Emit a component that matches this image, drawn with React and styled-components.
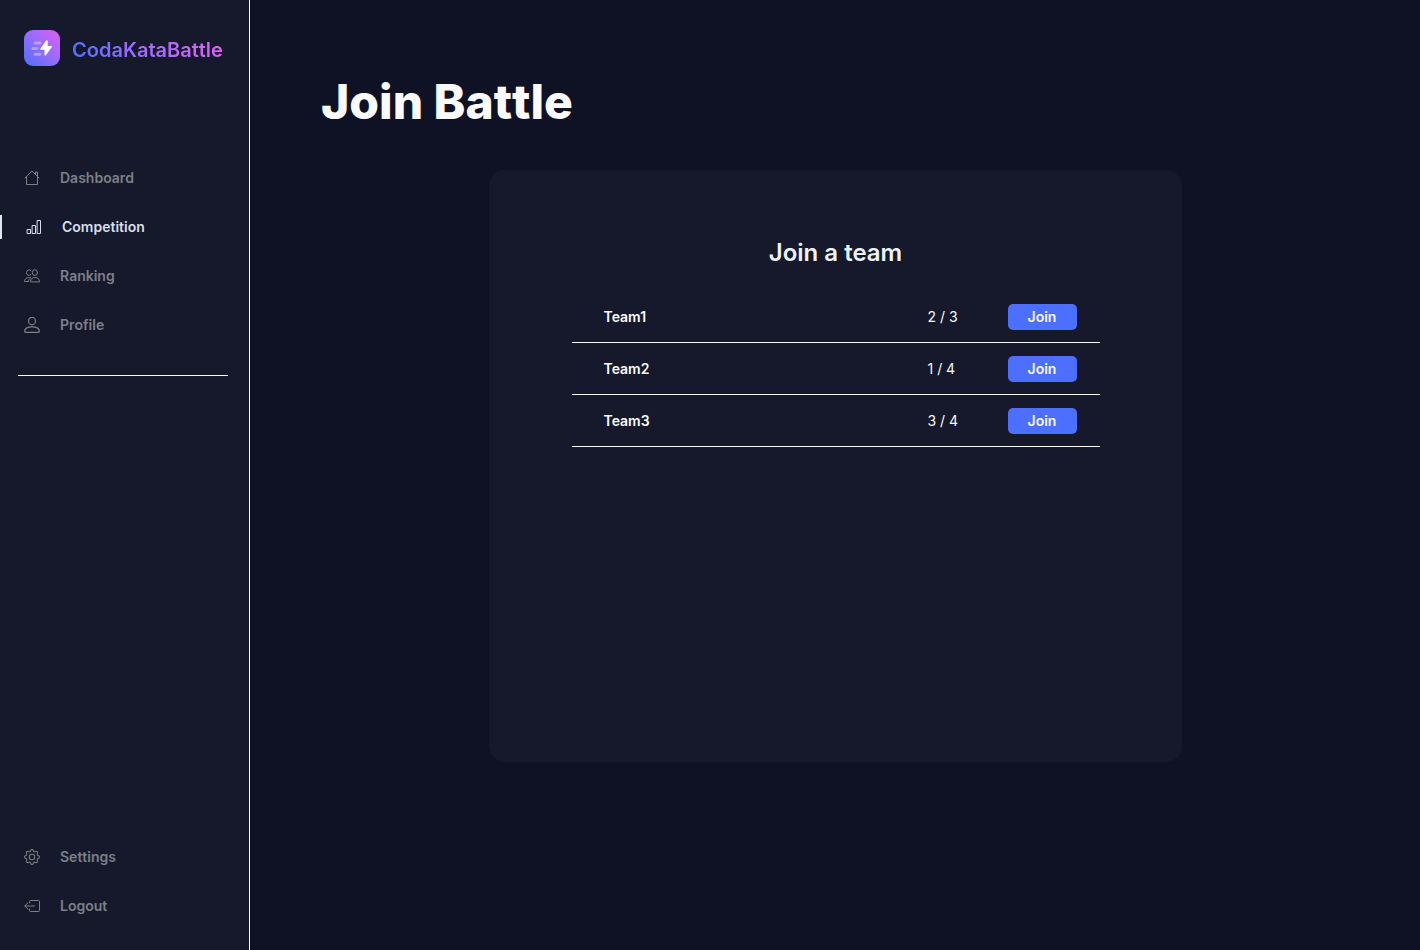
import React from "react";
import styled, { createGlobalStyle } from "styled-components";
import { BsGear } from "react-icons/bs";

const GlobalStyle = createGlobalStyle`
  * { box-sizing: border-box; }
  body {
    margin: 0;
    background: #0f1225;
    color: #fafafa;
    font-family: Inter, "Liberation Sans", sans-serif;
    font-size: 14px;
    line-height: 24px;
  }
`;

const Page = styled.div`
  display: flex;
  min-height: 100vh;
`;

const Sidebar = styled.aside`
  display: flex;
  flex-direction: column;
  flex: 0 0 250px;
  padding: 30px 0 32px;
  background: #16192b;
  border-right: 1px solid #fafafa;
  font-kerning: none;
`;

const Brand = styled.a`
  display: flex;
  align-items: center;
  gap: 12px;
  height: 36px;
  margin-bottom: 100px;
  padding-left: 24px;
  text-decoration: none;
`;

const BrandName = styled.span`
  padding-top: 4px;
  background: linear-gradient(70deg, #4c6fff, #a66bff 50%, #e261f5);
  background-clip: text;
  color: transparent;
  font-size: 20px;
  font-weight: 600;
`;

const NavList = styled.nav`
  display: flex;
  flex-direction: column;
  gap: 25px;
`;

const NavLink = styled.a`
  display: flex;
  align-items: center;
  gap: 20px;
  height: 24px;
  padding-left: 24px;
  border-left: ${(p) => (p.$active ? "2px solid #dbe6f0" : "none")};
  color: ${(p) => (p.$active ? "#d5dfe9" : "#7c8087")};
  font-weight: 600;
  text-decoration: none;
`;

const Icon = styled.svg`
  width: 16px;
  height: 16px;
  fill: none;
  stroke: currentColor;
  stroke-width: 1;
  stroke-linejoin: round;
  stroke-linecap: round;
`;

const Divider = styled.hr`
  width: auto;
  height: 1px;
  margin: 38px 21px auto 18px;
  border: 0;
  background: #fafafa;
`;

const Main = styled.main`
  flex: 1;
  min-width: 0;
  padding: 72px 71px 48px;
`;

const Title = styled.h1`
  margin: 0 0 38px;
  font-size: 48px;
  font-weight: 800;
  font-kerning: none;
  line-height: 60px;
`;

const Card = styled.section`
  width: 100%;
  max-width: 693px;
  min-height: 592px;
  margin: 0 auto;
  padding: 67px 82px 67px 83px;
  background: #16192b;
  border-radius: 16px;
`;

const CardTitle = styled.h2`
  margin: 0 0 22px;
  color: #edf2f7;
  font-size: 24px;
  font-weight: 600;
  line-height: 32px;
  text-align: center;
`;

const TeamTable = styled.table`
  width: 100%;
  border-spacing: 0;
  table-layout: fixed;
`;

const Cell = styled.td`
  width: ${(p) => p.$width || "auto"};
  height: 52px;
  padding: 0 0 0 ${(p) => p.$inset || "0"};
  border-bottom: 1px solid #fafafa;
  font-weight: ${(p) => (p.$strong ? 600 : 400)};
  text-align: left;
`;

const JoinButton = styled.button`
  display: block;
  width: 69px;
  height: 26px;
  padding: 0;
  border: 0;
  border-radius: 5px;
  background: #4c6fff;
  color: #fafafa;
  font: inherit;
  font-weight: 600;
  cursor: pointer;
`;

const LogoMark = () => (
  <svg width="36" height="36" viewBox="0 0 36 36" aria-hidden="true">
    <defs>
      <linearGradient id="mark" x1="0" y1="1" x2="1" y2="0">
        <stop offset="0" stopColor="#4c6fff" />
        <stop offset="0.5" stopColor="#966cff" />
        <stop offset="1" stopColor="#e45df2" />
      </linearGradient>
    </defs>
    <rect width="36" height="36" rx="9" fill="url(#mark)" />
    <g stroke="#fff" strokeOpacity="0.35" strokeWidth="3" strokeLinecap="round">
      <path d="M11 13h5M9 18.5h4M11 24.2h5" />
    </g>
    <path
      d="M22.2 10.6 16.3 18.7c-.4.6 0 1.1.6 1.1h3.6v4.9c0 .9.9 1.2 1.4.5l6-8.1c.4-.6 0-1.2-.6-1.2h-3.6v-4.9c0-.8-1-1.1-1.5-.4Z"
      fill="#fff"
    />
  </svg>
);

const HomeIcon = () => (
  <Icon viewBox="0 0 16 16" aria-hidden="true">
    <path d="M1 8 8 1l7 7M2.5 6.7V14.5h11V6.7M11.5 4.3V2h2v4.3" />
  </Icon>
);

const ChartIcon = () => (
  <Icon viewBox="0 0 16 16" aria-hidden="true">
    <path d="M1.5 10.5h3v4h-3zM6.500 6.500h3v8h-3zM11.500 1.500h3v13h-3z" />
  </Icon>
);

const PeopleIcon = () => (
  <Icon viewBox="0 0 16 16" aria-hidden="true">
    <ellipse cx="10.9" cy="4.600" rx="2.600" ry="2.900" />
    <path d="M6.500 13.500c0-2.600 1.700-4 4.400-4s4.600 1.400 4.600 4Z" />
    <path d="M6.800 6.600A2.500 2.800 0 1 1 6.900 2.800M6.500 9.600c-3.500-.5-6 1-6 3.900h3.500M6.300 10.300c-1.200.8-1.800 1.800-1.800 3.200" />
  </Icon>
);

const PersonIcon = () => (
  <Icon viewBox="0 0 16 16" aria-hidden="true">
    <ellipse cx="8" cy="4" rx="3.500" ry="3.800" strokeWidth="1.200" />
    <path
      d="M.6 14c0-2.600 3-4.200 7.400-4.200s7.400 1.600 7.400 4.200c0 .9-.5 1.400-1.300 1.400H1.900C1.100 15.400.6 14.900.6 14Z"
      strokeWidth="1.200"
    />
  </Icon>
);

const LogoutIcon = () => (
  <Icon viewBox="0 0 16 16" aria-hidden="true">
    <path d="M5.500 5V3.500a1 1 0 0 1 1-1h8a1 1 0 0 1 1 1v9a1 1 0 0 1-1 1h-8a1 1 0 0 1-1-1V11M10.500 8H1M3.800 5 .7 8l3.100 3" />
  </Icon>
);

const mainLinks = [
  { label: "Dashboard", icon: HomeIcon },
  { label: "Competition", icon: ChartIcon, active: true },
  { label: "Ranking", icon: PeopleIcon },
  { label: "Profile", icon: PersonIcon },
];

const accountLinks = [
  { label: "Settings", icon: BsGear },
  { label: "Logout", icon: LogoutIcon },
];

const teams = [
  { name: "Team1", members: "2 / 3" },
  { name: "Team2", members: "1 / 4" },
  { name: "Team3", members: "3 / 4" },
];

const Nav = ({ links, label }) => (
  <NavList aria-label={label}>
    {links.map(({ label: text, icon: Glyph, active }) => (
      <NavLink
        key={text}
        href={`#${text.toLowerCase()}`}
        $active={active}
        aria-current={active ? "page" : undefined}
      >
        <Glyph size={16} />
        {text}
      </NavLink>
    ))}
  </NavList>
);

export default function App() {
  return (
    <Page>
      <GlobalStyle />
      <Sidebar>
        <Brand href="#home">
          <LogoMark />
          <BrandName>CodaKataBattle</BrandName>
        </Brand>
        <Nav links={mainLinks} label="Main" />
        <Divider />
        <Nav links={accountLinks} label="Account" />
      </Sidebar>
      <Main>
        <Title>Join Battle</Title>
        <Card>
          <CardTitle>Join a team</CardTitle>
          <TeamTable>
            <tbody>
              {teams.map((team) => (
                <tr key={team.name}>
                  <Cell as="th" scope="row" $strong $inset="32px">
                    {team.name}
                  </Cell>
                  <Cell $width="80px">{team.members}</Cell>
                  <Cell $width="92px">
                    <JoinButton type="button" aria-label={`Join ${team.name}`}>
                      Join
                    </JoinButton>
                  </Cell>
                </tr>
              ))}
            </tbody>
          </TeamTable>
        </Card>
      </Main>
    </Page>
  );
}
